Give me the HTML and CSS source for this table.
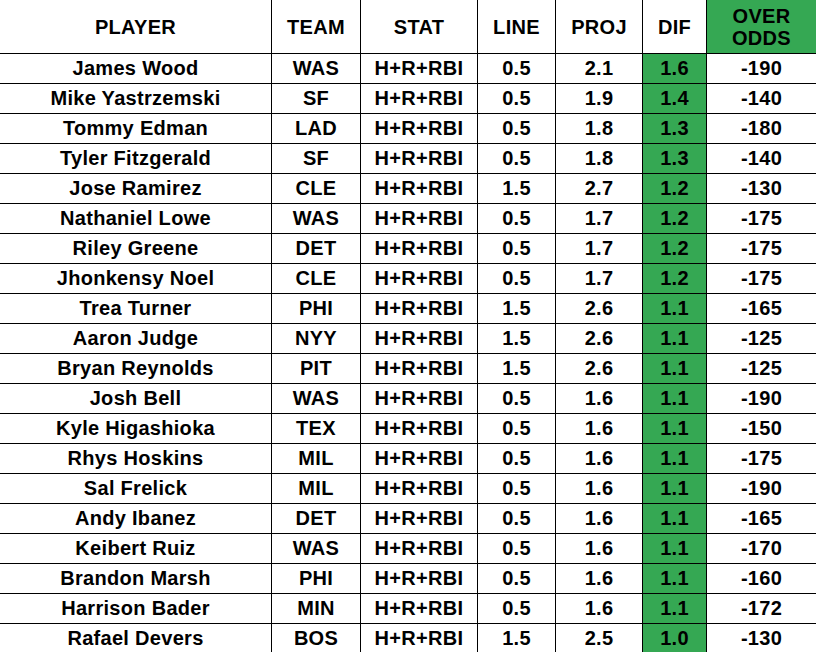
FILE: index.html
```html
<!DOCTYPE html>
<html lang="en">
<head>
  <meta charset="UTF-8" />
  <meta name="viewport" content="width=device-width, initial-scale=1.0" />
  <title>H+R+RBI Projections</title>
  <link rel="stylesheet" href="styles.css">
</head>
<body>
  <table class="props">
    <colgroup>
      <col class="c-player">
      <col class="c-team">
      <col class="c-stat">
      <col class="c-line">
      <col class="c-proj">
      <col class="c-dif">
      <col class="c-odds">
    </colgroup>
    <thead>
      <tr>
        <th>PLAYER</th>
        <th>TEAM</th>
        <th>STAT</th>
        <th>LINE</th>
        <th>PROJ</th>
        <th>DIF</th>
        <th class="green">OVER<br>ODDS</th>
      </tr>
    </thead>
    <tbody>
      <tr><td>James Wood</td><td>WAS</td><td>H+R+RBI</td><td>0.5</td><td>2.1</td><td class="green">1.6</td><td>-190</td></tr>
      <tr><td>Mike Yastrzemski</td><td>SF</td><td>H+R+RBI</td><td>0.5</td><td>1.9</td><td class="green">1.4</td><td>-140</td></tr>
      <tr><td>Tommy Edman</td><td>LAD</td><td>H+R+RBI</td><td>0.5</td><td>1.8</td><td class="green">1.3</td><td>-180</td></tr>
      <tr><td>Tyler Fitzgerald</td><td>SF</td><td>H+R+RBI</td><td>0.5</td><td>1.8</td><td class="green">1.3</td><td>-140</td></tr>
      <tr><td>Jose Ramirez</td><td>CLE</td><td>H+R+RBI</td><td>1.5</td><td>2.7</td><td class="green">1.2</td><td>-130</td></tr>
      <tr><td>Nathaniel Lowe</td><td>WAS</td><td>H+R+RBI</td><td>0.5</td><td>1.7</td><td class="green">1.2</td><td>-175</td></tr>
      <tr><td>Riley Greene</td><td>DET</td><td>H+R+RBI</td><td>0.5</td><td>1.7</td><td class="green">1.2</td><td>-175</td></tr>
      <tr><td>Jhonkensy Noel</td><td>CLE</td><td>H+R+RBI</td><td>0.5</td><td>1.7</td><td class="green">1.2</td><td>-175</td></tr>
      <tr><td>Trea Turner</td><td>PHI</td><td>H+R+RBI</td><td>1.5</td><td>2.6</td><td class="green">1.1</td><td>-165</td></tr>
      <tr><td>Aaron Judge</td><td>NYY</td><td>H+R+RBI</td><td>1.5</td><td>2.6</td><td class="green">1.1</td><td>-125</td></tr>
      <tr><td>Bryan Reynolds</td><td>PIT</td><td>H+R+RBI</td><td>1.5</td><td>2.6</td><td class="green">1.1</td><td>-125</td></tr>
      <tr><td>Josh Bell</td><td>WAS</td><td>H+R+RBI</td><td>0.5</td><td>1.6</td><td class="green">1.1</td><td>-190</td></tr>
      <tr><td>Kyle Higashioka</td><td>TEX</td><td>H+R+RBI</td><td>0.5</td><td>1.6</td><td class="green">1.1</td><td>-150</td></tr>
      <tr><td>Rhys Hoskins</td><td>MIL</td><td>H+R+RBI</td><td>0.5</td><td>1.6</td><td class="green">1.1</td><td>-175</td></tr>
      <tr><td>Sal Frelick</td><td>MIL</td><td>H+R+RBI</td><td>0.5</td><td>1.6</td><td class="green">1.1</td><td>-190</td></tr>
      <tr><td>Andy Ibanez</td><td>DET</td><td>H+R+RBI</td><td>0.5</td><td>1.6</td><td class="green">1.1</td><td>-165</td></tr>
      <tr><td>Keibert Ruiz</td><td>WAS</td><td>H+R+RBI</td><td>0.5</td><td>1.6</td><td class="green">1.1</td><td>-170</td></tr>
      <tr><td>Brandon Marsh</td><td>PHI</td><td>H+R+RBI</td><td>0.5</td><td>1.6</td><td class="green">1.1</td><td>-160</td></tr>
      <tr><td>Harrison Bader</td><td>MIN</td><td>H+R+RBI</td><td>0.5</td><td>1.6</td><td class="green">1.1</td><td>-172</td></tr>
      <tr><td>Rafael Devers</td><td>BOS</td><td>H+R+RBI</td><td>1.5</td><td>2.5</td><td class="green">1.0</td><td>-130</td></tr>
    </tbody>
  </table>
</body>
</html>
```

FILE: styles.css
```css
*, *::before, *::after { box-sizing: border-box; }
body {
  font-family: "Liberation Sans", Arial, sans-serif;
  background-color: #fff;
  color: #000;
  margin: 0;
  padding: 0;
  overflow: hidden;
}
.props {
  border-collapse: separate;
  border-spacing: 0;
  table-layout: fixed;
  width: 817px;
}
.c-player { width: 272px; }
.c-team { width: 89px; }
.c-stat { width: 117px; }
.c-line { width: 78px; }
.c-proj { width: 87px; }
.c-dif { width: 64px; }
.c-odds { width: 110px; }
th, td {
  padding: 0;
  text-align: center;
  vertical-align: middle;
  font-size: 20px;
  font-weight: bold;
  letter-spacing: 0.3px;
  border-right: 1px solid #000;
  border-bottom: 1px solid #000;
  white-space: nowrap;
}
th {
  height: 54px;
  line-height: 22px;
}
td {
  height: 30px;
  line-height: 29px;
}
.green {
  background-color: #35a853;
}
```
